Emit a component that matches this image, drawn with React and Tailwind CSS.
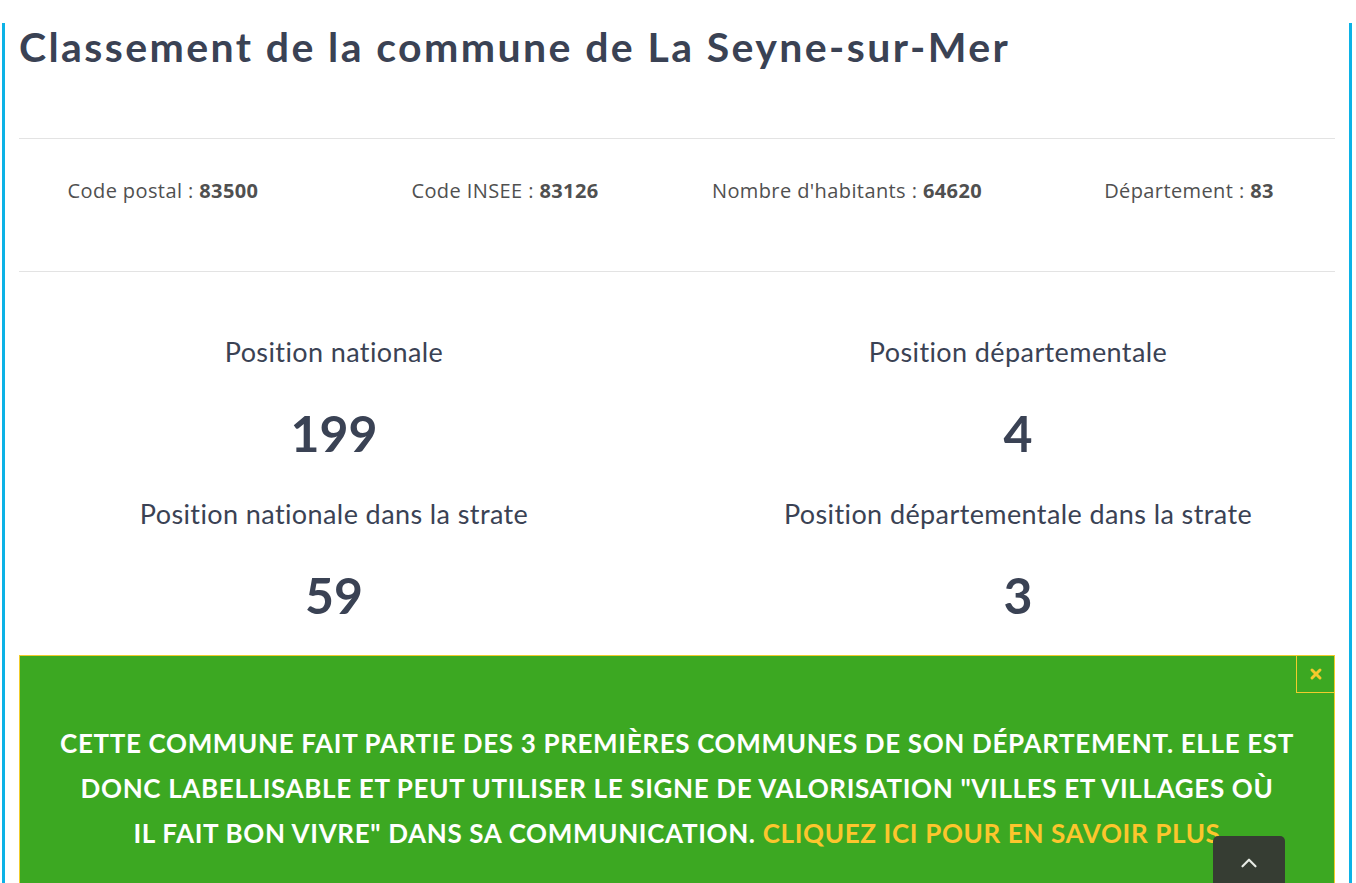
import { X, ChevronUp } from 'lucide-react';

const infos = [
    { label: 'Code postal', value: '83500' },
    { label: 'Code INSEE', value: '83126' },
    { label: "Nombre d'habitants", value: '64620' },
    { label: 'Département', value: '83' },
];

const stats = [
    { label: 'Position nationale', value: '199' },
    { label: 'Position départementale', value: '4' },
    { label: 'Position nationale dans la strate', value: '59' },
    { label: 'Position départementale dans la strate', value: '3' },
];

const raleway = "font-['Lato','Open_Sans',sans-serif]";

const App = () => {
    return (
        <div className="relative min-h-screen bg-white overflow-hidden">
            <div className="ml-[2px] w-[1350px] border-x-[3px] border-[#0cb2e6] px-[14px] pb-10">
                <h1 className={`${raleway} mt-[23px] text-[41px] leading-[48px] font-bold tracking-[2.4px] text-[#3a4254]`}>
                    Classement de la commune de La Seyne-sur-Mer
                </h1>

                <div className="mt-[67px] border-t border-[#e3e3e3]" />

                {/* infos générales */}
                <div className="-ml-[27px] w-[1368px] grid grid-cols-4 pt-[39px] pb-[67px]">
                    {infos.map((info) => (
                        <div key={info.label} className="text-center font-['Open_Sans',sans-serif] text-[20px] leading-[26px] tracking-[0.4px] text-[#505050]">
                            {info.label} : <span className="font-bold">{info.value}</span>
                        </div>
                    ))}
                </div>

                <div className="border-t border-[#e3e3e3]" />

                {/* classements */}
                <div className="-ml-[27px] w-[1368px] grid grid-cols-2 pt-[64px]">
                    {stats.map((s, i) => (
                        <div key={s.label} className={`${raleway} text-center text-[#3a4254] ${i >= 2 ? 'pt-[37px]' : ''}`}>
                            <div className="text-[27px] leading-[32px] tracking-[0.4px]">{s.label}</div>
                            <div className="mt-[37px] text-[50px] leading-[56px] font-bold">{s.value}</div>
                        </div>
                    ))}
                </div>

                {/* bandeau label */}
                <div className="relative mt-[32px] bg-[#3ca822] border border-[#f0cc2c] px-[20px] pt-[65px] pb-[60px]">
                    <button className="absolute top-0 right-0 w-[38px] h-[37px] flex items-center justify-center border-l border-b border-[#f0cc2c]">
                        <X size={16} strokeWidth={4.5} color="#f6c92c" />
                    </button>
                    <p className={`${raleway} text-center text-white font-bold uppercase text-[26px] leading-[45px] tracking-[0.65px]`}>
                        Cette commune fait partie des 3 premières communes de son département. Elle est<br />
                        donc labellisable et peut utiliser le signe de valorisation "Villes et villages où<br />
                        il fait bon vivre" dans sa communication. <span className="text-[#fcc62d]">Cliquez ici pour en savoir plus</span>
                    </p>
                </div>
            </div>

            {/* retour en haut */}
            <div className="fixed left-[1213px] top-[836px] w-[72px] h-[60px] rounded-t-[5px] bg-[#363d33] flex justify-center pt-[14px]">
                <ChevronUp size={26} strokeWidth={2} color="#e8ece6" />
            </div>
        </div>
    );
};

export default App;
